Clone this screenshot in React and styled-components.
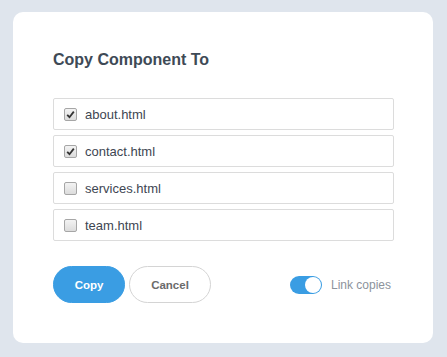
import React from 'react';
import styled, { createGlobalStyle } from 'styled-components';

const Global = createGlobalStyle`
  html, body {
    margin: 0;
    padding: 0;
    background: #dfe5ed;
    font-family: 'Liberation Sans', Arial, sans-serif;
  }
`;

const Page = styled.div`
  padding: 12px 14px 14px 13px;
  width: 447px;
  height: 357px;
  box-sizing: border-box;
`;

const Card = styled.div`
  background: #fff;
  border-radius: 10px;
  height: 331px;
  box-sizing: border-box;
  padding: 40px 39px 0 40px;
`;

const Title = styled.h2`
  margin: 0 0 30px;
  font-size: 16px;
  font-weight: bold;
  color: #3e4a56;
  line-height: 16px;
`;

const List = styled.div`
  display: flex;
  flex-direction: column;
  gap: 5px;
`;

const Row = styled.label`
  display: flex;
  align-items: center;
  height: 32px;
  box-sizing: border-box;
  border: 1px solid #dcdcdc;
  border-radius: 2px;
  padding-left: 10px;
  font-size: 13px;
  color: #3e4652;
`;

const Box = styled.span`
  width: 11px;
  height: 11px;
  border: 1px solid #a6a6a6;
  border-radius: 2px;
  background: linear-gradient(#f3f3f3, #dcdcdc);
  margin-right: 8px;
  display: flex;
  align-items: center;
  justify-content: center;
`;

const Footer = styled.div`
  display: flex;
  align-items: center;
  margin-top: 25px;
`;

const Button = styled.button`
  height: 37px;
  border-radius: 19px;
  font-family: inherit;
  font-size: 11.5px;
  font-weight: bold;
  padding: 0;
  margin-right: 4px;
  cursor: pointer;
  width: ${p => (p.$primary ? '72px' : '82px')};
  background: ${p => (p.$primary ? '#3a9de3' : '#fff')};
  color: ${p => (p.$primary ? '#fff' : '#6b6b6b')};
  border: 1px solid ${p => (p.$primary ? '#3a9de3' : '#d4d4d4')};
`;

const ToggleWrap = styled.div`
  margin-left: auto;
  display: flex;
  align-items: center;
  gap: 9px;
  font-size: 12px;
  color: #8c939c;
  margin-right: 3px;
`;

const Track = styled.span`
  width: 32px;
  height: 18px;
  border-radius: 9px;
  background: #3a9de3;
  display: flex;
  align-items: center;
  justify-content: flex-end;
  padding: 1px;
  box-sizing: border-box;
`;

const Knob = styled.span`
  width: 16px;
  height: 16px;
  border-radius: 50%;
  background: #fff;
`;

const files = [
  { name: 'about.html', checked: true },
  { name: 'contact.html', checked: true },
  { name: 'services.html', checked: false },
  { name: 'team.html', checked: false },
];

const Check = () => (
  <svg width="9" height="9" viewBox="0 0 9 9">
    <path d="M1.2 4.8 L3.5 7.2 L7.8 1.6" fill="none" stroke="#333" strokeWidth="1.8" />
  </svg>
);

export default function App() {
  return (
    <Page>
      <Global />
      <Card>
        <Title>Copy Component To</Title>
        <List>
          {files.map(f => (
            <Row key={f.name}>
              <Box>{f.checked && <Check />}</Box>
              {f.name}
            </Row>
          ))}
        </List>
        <Footer>
          <Button $primary>Copy</Button>
          <Button>Cancel</Button>
          <ToggleWrap>
            <Track>
              <Knob />
            </Track>
            Link copies
          </ToggleWrap>
        </Footer>
      </Card>
    </Page>
  );
}
